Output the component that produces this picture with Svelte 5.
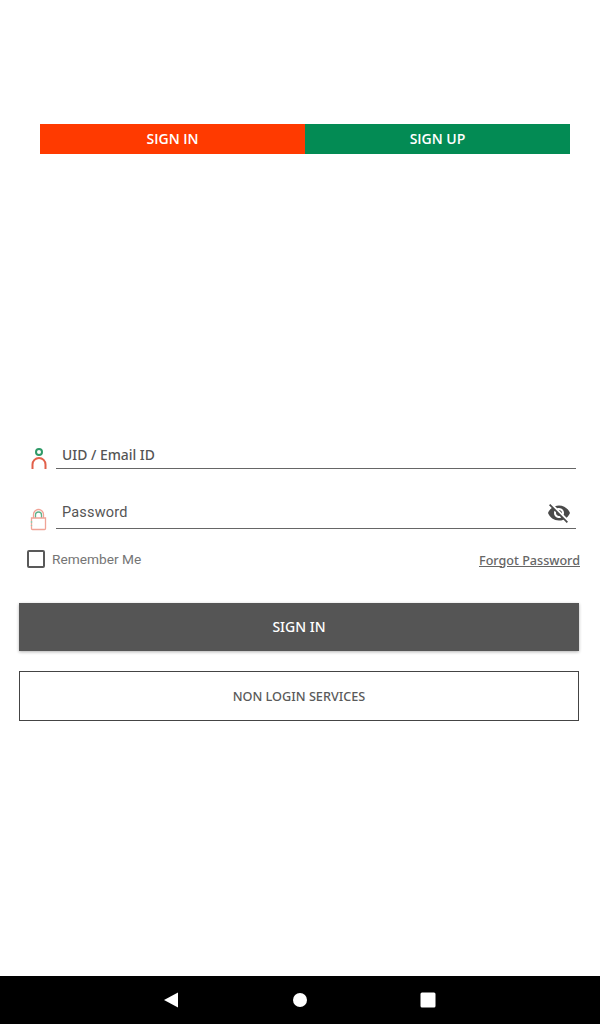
<script>
    let remember = false;
</script>

<main class="page">
    <div class="tabs">
        <button class="tab signin">SIGN IN</button>
        <button class="tab signup">SIGN UP</button>
    </div>

    <form class="form" on:submit|preventDefault>
        <div class="field uid">
            <svg class="icon" width="18" height="24" viewBox="0 0 18 24">
                <circle cx="9" cy="5" r="3" fill="none" stroke="#2f9a68" stroke-width="2"/>
                <path d="M2.500 22v-4.500a6.500 6.500 0 0 1 13 0V22" fill="none" stroke="#e2604a" stroke-width="2"/>
            </svg>
            <div class="line"><span class="uid-label">UID / Email ID</span></div>
        </div>

        <div class="field pass">
            <svg class="icon" width="18" height="24" viewBox="0 0 18 24">
                <path d="M3.500 11V7.500a5 5 0 0 1 10 0V11" fill="none" stroke="#f0a396" stroke-width="1.300"/>
                <path d="M5.500 11V8a3 3 0 0 1 6 0v3" fill="none" stroke="#5fb18c" stroke-width="1.300"/>
                <path d="M1.500 11h14v10.500a1 1 0 0 1-1 1h-12a1 1 0 0 1-1-1z" fill="#fff" stroke="#f0a396" stroke-width="1.300"/>
                <path d="M1.500 14v2M1.500 18v1" stroke="#8fcbb0" stroke-width="1.300"/>
            </svg>
            <div class="line">
                <span class="pass-label">Password</span>
                <svg class="eye" width="24" height="24" viewBox="0 0 24 24" fill="#4a4a4a">
                    <path d="M12 7c2.760 0 5 2.240 5 5 0 .650-.130 1.260-.360 1.830l2.920 2.920c1.510-1.260 2.700-2.890 3.430-4.750-1.730-4.390-6-7.500-11-7.500-1.400 0-2.740.250-3.980.700l2.160 2.160C10.740 7.130 11.350 7 12 7zM2 4.270l2.280 2.280.460.460C3.080 8.300 1.780 10.020 1 12c1.730 4.390 6 7.500 11 7.500 1.550 0 3.030-.300 4.380-.840l.420.420L19.730 22 21 20.730 3.270 3 2 4.270zM7.530 9.800l1.550 1.550c-.050.210-.080.430-.080.650 0 1.660 1.340 3 3 3 .220 0 .440-.030.650-.080l1.550 1.550c-.670.330-1.410.530-2.200.530-2.760 0-5-2.240-5-5 0-.790.200-1.530.530-2.200zm4.310-.780l3.150 3.150.020-.160c0-1.660-1.340-3-3-3l-.170.010z"/>
                </svg>
            </div>
        </div>

        <div class="options">
            <label class="remember">
                <input type="checkbox" bind:checked={remember} />
                <span class="box"></span>
                Remember Me
            </label>
            <a class="forgot" href="#forgot">Forgot Password</a>
        </div>

        <button class="primary" type="submit">SIGN IN</button>
        <button class="outline" type="button">NON LOGIN SERVICES</button>
    </form>

    <nav class="navbar">
        <svg width="16" height="16" viewBox="0 0 16 16"><path d="M15 .5v15L1 8z" fill="#fff"/></svg>
        <svg width="16" height="16" viewBox="0 0 16 16"><circle cx="8" cy="8" r="7" fill="#fff"/></svg>
        <svg class="recents" width="16" height="16" viewBox="0 0 16 16"><rect x="0.500" y="0.500" width="15" height="15" rx="1.500" fill="#fff"/></svg>
    </nav>
</main>

<style>
    :global(body) {
        margin: 0;
        background: #fff;
    }

    .page {
        display: flex;
        flex-direction: column;
        height: 1024px;
        font-family: Roboto, sans-serif;
    }

    .tabs {
        display: flex;
        margin: 124px 30px 0 40px;
        height: 30px;
    }

    .tab {
        flex: 1;
        border: 0;
        padding: 0 0 2px;
        color: #fff;
        font: 600 14px "Open Sans", sans-serif;
    }

    .signin {
        background: #ff3a00;
    }

    .signup {
        background: #038b54;
    }

    .form {
        display: flex;
        flex-direction: column;
        flex: 1;
        padding: 287px 21px 0 19px;
    }

    .field {
        display: flex;
        align-items: flex-end;
        margin-right: 3px;
        color: #555;
    }

    .icon {
        flex: none;
        margin-left: 11px;
        margin-right: 8px;
    }

    .uid {
        height: 28px;
    }

    .uid .icon {
        margin-bottom: -2px;
        margin-left: 11px;
        margin-right: 8px;
    }

    .pass {
        height: 32px;
        margin-top: 28px;
    }

    .pass .icon {
        margin-bottom: -2px;
    }

    .line {
        flex: 1;
        display: flex;
        align-items: center;
        justify-content: space-between;
        border-bottom: 1px solid #666;
        padding-left: 6px;
    }

    .uid .line {
        height: 27px;
    }

    .pass .line {
        height: 31px;
    }

    .uid-label {
        font: 500 13.900px "Noto Sans", sans-serif;
        margin-top: -1px;
    }

    .pass-label {
        font-size: 14.500px;
        letter-spacing: 0.200px;
        margin-top: -1px;
    }

    .eye {
        margin-right: 5px;
    }

    .options {
        display: flex;
        align-items: center;
        justify-content: space-between;
        height: 20px;
        margin-top: 20px;
        margin-right: -1px;
    }

    .remember {
        display: flex;
        align-items: center;
        gap: 7px;
        margin-left: 8px;
        color: #757575;
        font-size: 13.700px;
    }

    .remember input {
        display: none;
    }

    .box {
        width: 14px;
        height: 14px;
        border: 2px solid #595959;
        border-radius: 2px;
    }

    .forgot {
        padding-top: 2px;
        color: #666;
        font: 500 12.600px "Noto Sans", sans-serif;
        text-decoration: underline;
    }

    .primary {
        height: 48px;
        margin-top: 34px;
        border: 0;
        padding: 0 0 2px;
        background: #555;
        color: #fff;
        font: 500 14px "Noto Sans", sans-serif;
        box-shadow: 0 1px 3px rgba(0, 0, 0, 0.300);
    }

    .outline {
        height: 50px;
        margin-top: 20px;
        border: 1px solid #444;
        background: #fff;
        color: #5a5a5a;
        font: 500 12.700px "Noto Sans", sans-serif;
    }

    .navbar {
        display: flex;
        justify-content: center;
        align-items: center;
        gap: 113px;
        height: 48px;
        padding-right: 1px;
        background: #000;
    }

    .recents {
        margin-left: -1px;
    }
</style>
